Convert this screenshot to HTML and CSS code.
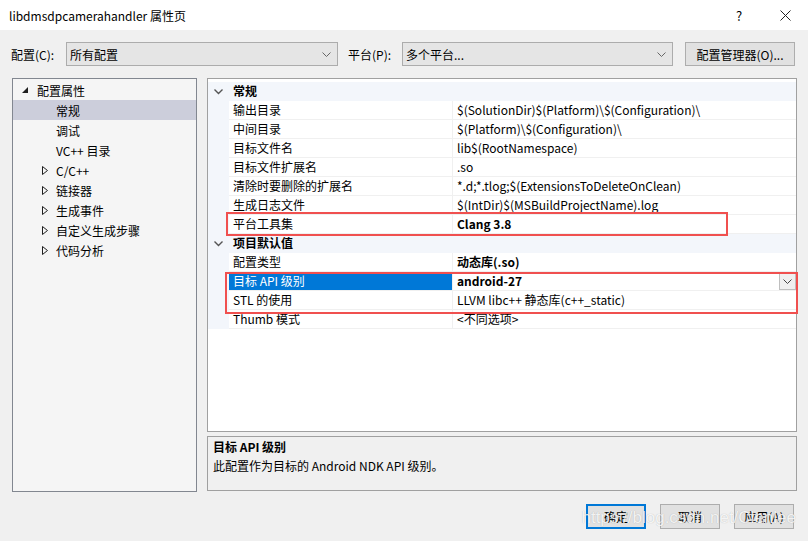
FILE: index.html
```html
<!DOCTYPE html>
<html lang="zh-CN">
<head>
    <meta charset="UTF-8">
    <title>libdmsdpcamerahandler 属性页</title>
    <link rel="stylesheet" href="styles.css">
</head>
<body>
    <div class="window">
        <!-- Title bar -->
        <div class="titlebar">
            <span class="title">libdmsdpcamerahandler 属性页</span>
            <span class="tb-btn help">?</span>
            <span class="tb-btn close">
                <svg width="11" height="11" viewBox="0 0 11 11"><path d="M0.5 0.5 L10.5 10.5 M10.5 0.5 L0.5 10.5" stroke="#222" stroke-width="1" fill="none"/></svg>
            </span>
        </div>

        <!-- Configuration / platform selector -->
        <div class="toolbar">
            <label class="tool-label">配置(C):</label>
            <div class="combo combo-config">
                <span>所有配置</span>
                <svg class="chev" width="9" height="5" viewBox="0 0 9 5"><path d="M0.5 0.5 L4.5 4.5 L8.5 0.5" stroke="#666" fill="none"/></svg>
            </div>
            <label class="tool-label platform-label">平台(P):</label>
            <div class="combo combo-platform">
                <span>多个平台...</span>
                <svg class="chev" width="9" height="5" viewBox="0 0 9 5"><path d="M0.5 0.5 L4.5 4.5 L8.5 0.5" stroke="#666" fill="none"/></svg>
            </div>
            <button class="btn btn-manager">配置管理器(O)...</button>
        </div>

        <div class="panes">
            <!-- Tree -->
            <div class="tree">
                <div class="tree-item level0">
                    <svg class="tri" width="6" height="6" viewBox="0 0 6 6"><path d="M6 0 L6 6 L0 6 Z" fill="#1e1e1e"/></svg>
                    <span>配置属性</span>
                </div>
                <div class="tree-item level1 selected"><span>常规</span></div>
                <div class="tree-item level1"><span>调试</span></div>
                <div class="tree-item level1"><span>VC++ 目录</span></div>
                <div class="tree-item level1 has-kids">
                    <svg class="tri" width="6" height="9" viewBox="0 0 6 9"><path d="M0.5 0.5 L5.5 4.5 L0.5 8.5 Z" fill="none" stroke="#1e1e1e"/></svg>
                    <span>C/C++</span>
                </div>
                <div class="tree-item level1 has-kids">
                    <svg class="tri" width="6" height="9" viewBox="0 0 6 9"><path d="M0.5 0.5 L5.5 4.5 L0.5 8.5 Z" fill="none" stroke="#1e1e1e"/></svg>
                    <span>链接器</span>
                </div>
                <div class="tree-item level1 has-kids">
                    <svg class="tri" width="6" height="9" viewBox="0 0 6 9"><path d="M0.5 0.5 L5.5 4.5 L0.5 8.5 Z" fill="none" stroke="#1e1e1e"/></svg>
                    <span>生成事件</span>
                </div>
                <div class="tree-item level1 has-kids">
                    <svg class="tri" width="6" height="9" viewBox="0 0 6 9"><path d="M0.5 0.5 L5.5 4.5 L0.5 8.5 Z" fill="none" stroke="#1e1e1e"/></svg>
                    <span>自定义生成步骤</span>
                </div>
                <div class="tree-item level1 has-kids">
                    <svg class="tri" width="6" height="9" viewBox="0 0 6 9"><path d="M0.5 0.5 L5.5 4.5 L0.5 8.5 Z" fill="none" stroke="#1e1e1e"/></svg>
                    <span>代码分析</span>
                </div>
            </div>

            <div class="right">
                <!-- Property grid -->
                <div class="grid">
                    <div class="group">
                        <div class="gutter"><svg width="9" height="6" viewBox="0 0 9 6"><path d="M0.5 0.5 L4.5 4.5 L8.5 0.5" stroke="#555" stroke-width="1.4" fill="none"/></svg></div>
                        <div class="group-name">常规</div>
                    </div>
                    <div class="prop"><div class="gutter"></div><div class="name">输出目录</div><div class="value">$(SolutionDir)$(Platform)\$(Configuration)\</div></div>
                    <div class="prop"><div class="gutter"></div><div class="name">中间目录</div><div class="value">$(Platform)\$(Configuration)\</div></div>
                    <div class="prop"><div class="gutter"></div><div class="name">目标文件名</div><div class="value">lib$(RootNamespace)</div></div>
                    <div class="prop"><div class="gutter"></div><div class="name">目标文件扩展名</div><div class="value">.so</div></div>
                    <div class="prop"><div class="gutter"></div><div class="name">清除时要删除的扩展名</div><div class="value">*.d;*.tlog;$(ExtensionsToDeleteOnClean)</div></div>
                    <div class="prop"><div class="gutter"></div><div class="name">生成日志文件</div><div class="value">$(IntDir)$(MSBuildProjectName).log</div></div>
                    <div class="prop"><div class="gutter"></div><div class="name">平台工具集</div><div class="value bold">Clang 3.8</div></div>
                    <div class="group">
                        <div class="gutter"><svg width="9" height="6" viewBox="0 0 9 6"><path d="M0.5 0.5 L4.5 4.5 L8.5 0.5" stroke="#555" stroke-width="1.4" fill="none"/></svg></div>
                        <div class="group-name">项目默认值</div>
                    </div>
                    <div class="prop"><div class="gutter"></div><div class="name">配置类型</div><div class="value bold">动态库(.so)</div></div>
                    <div class="prop active"><div class="gutter"></div><div class="name">目标 API 级别</div><div class="value bold">android-27
                        <span class="drop"><svg width="9" height="5" viewBox="0 0 9 5"><path d="M0.5 0.5 L4.5 4.5 L8.5 0.5" stroke="#444" fill="none"/></svg></span></div></div>
                    <div class="prop"><div class="gutter"></div><div class="name">STL 的使用</div><div class="value">LLVM libc++ 静态库(c++_static)</div></div>
                    <div class="prop"><div class="gutter"></div><div class="name">Thumb 模式</div><div class="value">&lt;不同选项&gt;</div></div>

                    <!-- annotation boxes -->
                    <div class="mark mark-toolset"></div>
                    <div class="mark mark-api"></div>
                </div>

                <!-- Description -->
                <div class="desc">
                    <div class="desc-title">目标 API 级别</div>
                    <div class="desc-text">此配置作为目标的 Android NDK API 级别。</div>
                </div>
            </div>
        </div>

        <div class="actions">
            <button class="btn btn-action default">确定</button>
            <button class="btn btn-action">取消</button>
            <button class="btn btn-action">应用(A)</button>
            <span class="watermark">https://blog.csdn.net/Clenlee</span>
        </div>
    </div>
</body>
</html>
```

FILE: styles.css
```css
:root {
    --bg-dialog: #f0f0f0;
    --text: #000;
    --border-panel: #a0a0a0;
    --border-tree: #828790;
    --gutter: #f3f6fb;
    --row-line: #f0f0f0;
    --accent: #0078d7;
    --mark: #f0504f;
}

* {
    box-sizing: border-box;
    margin: 0;
    padding: 0;
}

body {
    width: 808px;
    height: 541px;
    overflow: hidden;
    background: var(--bg-dialog);
    font-family: "Noto Sans CJK SC", "Noto Sans", sans-serif;
    font-size: 12px;
    color: var(--text);
}

.window {
    height: 100%;
    display: flex;
    flex-direction: column;
}

/* title bar */
.titlebar {
    height: 30px;
    background: #fff;
    display: flex;
    align-items: center;
    padding-left: 9px;
}

.title {
    flex: 1;
}

.tb-btn {
    display: flex;
    align-items: center;
    justify-content: center;
    width: 46px;
    height: 30px;
}

.help {
    font-size: 13px;
}

/* toolbar */
.toolbar {
    display: flex;
    align-items: center;
    height: 24px;
    margin-top: 12px;
    padding-left: 11px;
}

.tool-label {
    width: 55px;
}

.platform-label {
    margin-left: 10px;
    width: 54px;
}

.combo {
    height: 24px;
    background: #e5e5e5;
    border: 1px solid #acacac;
    display: flex;
    align-items: center;
    justify-content: space-between;
    padding: 0 6px 0 3px;
}

.combo-config {
    width: 272px;
}

.combo-platform {
    width: 271px;
}

.btn {
    font-family: inherit;
    font-size: 12px;
    color: var(--text);
    background: #e1e1e1;
    border: 1px solid #adadad;
}

.btn-manager {
    margin-left: 12px;
    width: 110px;
    height: 24px;
}

/* panes */
.panes {
    display: flex;
    margin-top: 12px;
    padding-left: 12px;
}

.tree {
    width: 185px;
    height: 414px;
    background: #f5f5f5;
    border: 1px solid var(--border-tree);
    padding-top: 1px;
}

.tree-item {
    height: 20px;
    display: flex;
    align-items: center;
}

.tree-item.level0 {
    padding-left: 9px;
}

.tree-item.level0 .tri {
    margin-right: 9px;
}

.tree-item.level1 {
    padding-left: 43px;
}

.tree-item.has-kids {
    padding-left: 29px;
}

.tree-item.has-kids .tri {
    margin-right: 8px;
}

.tree-item.selected {
    background: #cccedb;
}

.right {
    width: 590px;
    margin-left: 10px;
    display: flex;
    flex-direction: column;
    gap: 4px;
}

/* property grid */
.grid {
    position: relative;
    height: 354px;
    background: #fff;
    border: 1px solid var(--border-panel);
    padding-top: 3px;
}

.group,
.prop {
    display: flex;
    height: 19px;
    line-height: 18px;
}

.group {
    background: var(--gutter);
}

.gutter {
    width: 21px;
    flex-shrink: 0;
    background: var(--gutter);
    display: flex;
    align-items: center;
    justify-content: center;
}

.group-name {
    padding-left: 4px;
    font-weight: bold;
}

.name {
    width: 224px;
    flex-shrink: 0;
    padding-left: 4px;
    border-right: 1px solid var(--row-line);
    border-bottom: 1px solid var(--row-line);
    white-space: nowrap;
}

.value {
    flex: 1;
    padding-left: 4px;
    border-bottom: 1px solid var(--row-line);
    white-space: nowrap;
    position: relative;
}

.bold {
    font-weight: bold;
}

.prop.active .name {
    background: var(--accent);
    color: #fff;
}

.drop {
    position: absolute;
    right: 0;
    top: 0;
    width: 17px;
    height: 18px;
    border: 1px solid #bfbfbf;
    background: #f0f0f0;
    display: flex;
    align-items: center;
    justify-content: center;
}

.mark {
    position: absolute;
    border: 2px solid var(--mark);
}

.mark-toolset {
    left: 18px;
    top: 133px;
    width: 502px;
    height: 24px;
}

.mark-api {
    left: 17px;
    top: 193px;
    width: 573px;
    height: 42px;
}

/* description */
.desc {
    height: 55px;
    border: 1px solid var(--border-panel);
    padding: 0 5px;
    line-height: 19px;
}

.desc-title {
    font-weight: bold;
}

/* buttons */
.actions {
    position: relative;
    display: flex;
    justify-content: flex-end;
    gap: 14px;
    margin-top: 12px;
    padding-right: 14px;
}

.btn-action {
    width: 60px;
    height: 25px;
}

.btn-action.default {
    border: 2px solid var(--accent);
}

.watermark {
    position: absolute;
    right: 12px;
    top: 4px;
    font-family: "Liberation Sans", sans-serif;
    font-size: 17px;
    color: rgba(255, 255, 255, 0.85);
    text-shadow: 0 0 1px rgba(0, 0, 0, 0.25);
    pointer-events: none;
}
```
